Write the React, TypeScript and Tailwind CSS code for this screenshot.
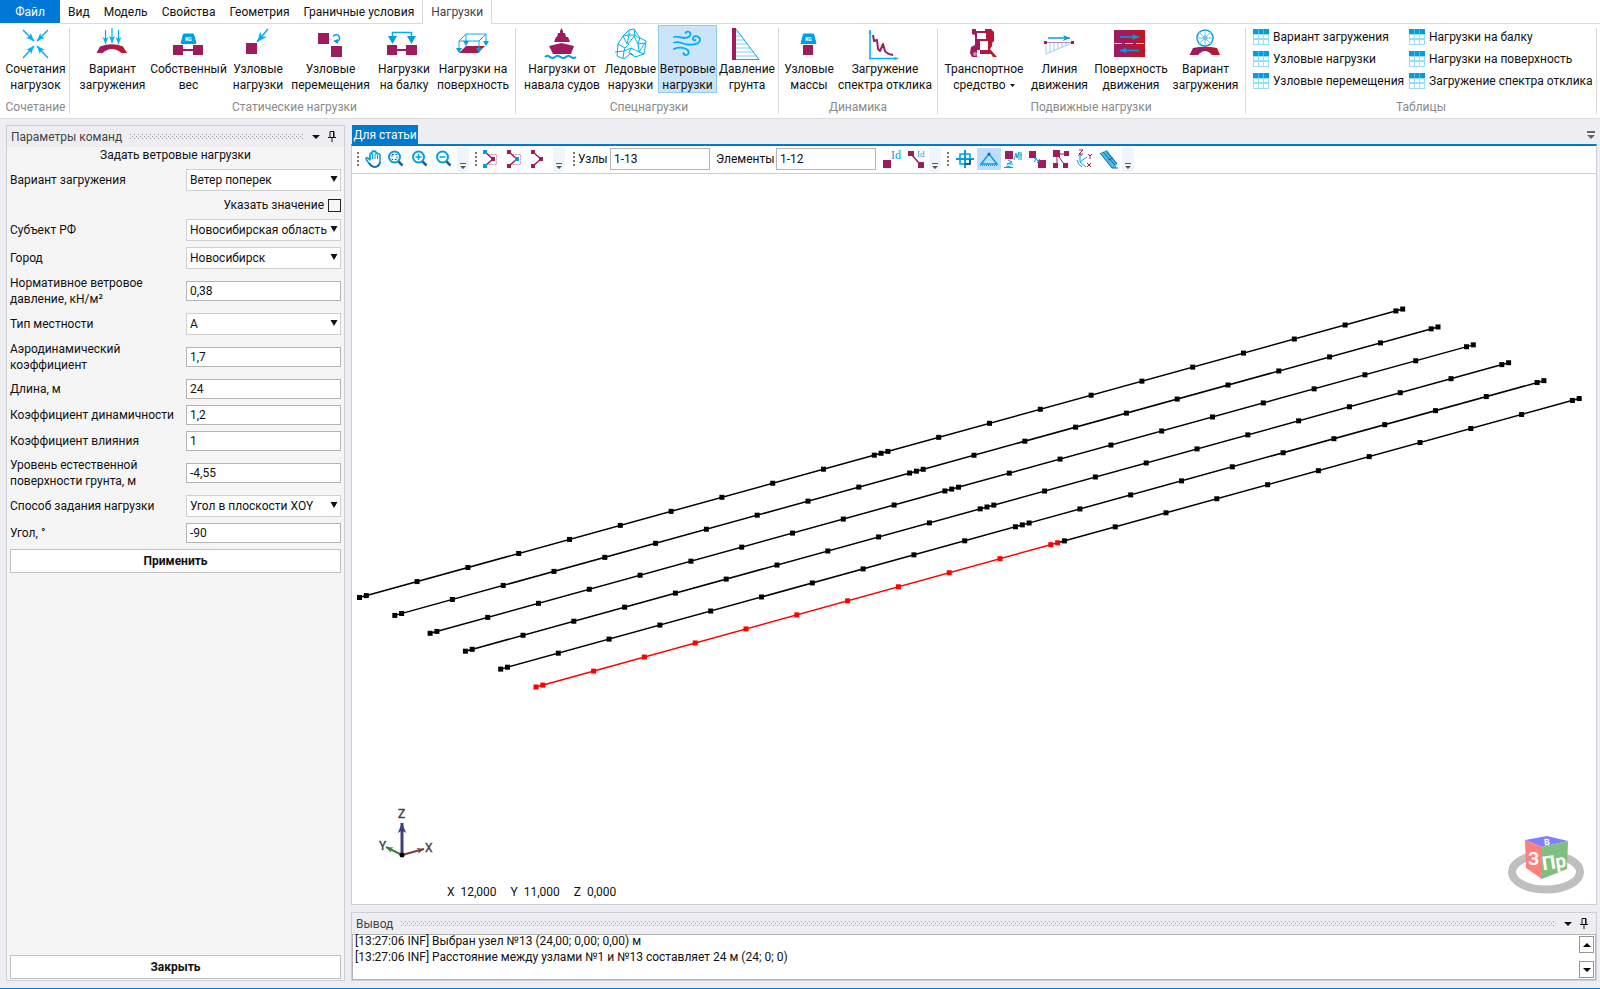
import { useId } from 'react';
import type { ReactNode } from 'react';
import { clsx } from 'clsx';

const BLUE = '#00b0f5';
const CYAN = '#009fe3';
const PLUM = '#9e1b5d';

/* ---------- drawing helpers ---------- */

interface ArrowProps {
  from: [number, number];
  to: [number, number];
  head?: number;
  color?: string;
  width?: number;
}

const Arrow = ({ from, to, head = 7, color = BLUE, width = 1.2 }: ArrowProps) => {
  const angle = Math.atan2(to[1] - from[1], to[0] - from[0]);
  const point = (offset: number, side: number) =>
    [
      to[0] - head * offset * Math.cos(angle) - side * Math.sin(angle),
      to[1] - head * offset * Math.sin(angle) + side * Math.cos(angle),
    ].join(',');
  return (
    <g fill={color} stroke="none">
      <line x1={from[0]} y1={from[1]} x2={to[0]} y2={to[1]} stroke={color} strokeWidth={width} />
      <polygon points={[to.join(','), point(1, head * 0.42), point(0.75, 0), point(1, -head * 0.42)].join(' ')} />
    </g>
  );
};

const BigIcon = ({ children }: { children: ReactNode }) => (
  <svg viewBox="0 0 32 32" className="size-8 shrink-0 overflow-visible" fill="none" aria-hidden="true">
    {children}
  </svg>
);

const RedGradient = ({ id }: { id: string }) => (
  <linearGradient id={id} x1="0" x2="1" y1="0" y2="0">
    <stop offset="0.3" stopColor={PLUM} />
    <stop offset="1" stopColor="#c4161c" />
  </linearGradient>
);

const Weight = () => (
  <>
    <path d="M10.500 6H20.500L23 15.500H8Z" fill={CYAN} stroke={CYAN} strokeLinejoin="round" />
    <text x="15.500" y="13" textAnchor="middle" fontSize="5" fontWeight="800" fill="#fff">KG</text>
  </>
);

/* ---------- ribbon icons ---------- */

const CombinationIcon = () => (
  <BigIcon>
    <Arrow from={[3, 2]} to={[14, 13]} head={8} width={1.5} />
    <Arrow from={[28, 2]} to={[17, 13]} head={8} width={1.5} />
    <Arrow from={[3, 30]} to={[14, 18]} head={8} width={1.5} />
    <Arrow from={[28, 30]} to={[17, 18]} head={8} width={1.5} />
  </BigIcon>
);

const LoadCaseIcon = () => {
  const id = useId();
  return (
    <BigIcon>
      <defs><RedGradient id={id} /></defs>
      <Arrow from={[8.5, 2]} to={[8.5, 16]} />
      <Arrow from={[15, 0]} to={[15, 15]} />
      <Arrow from={[21.5, 2]} to={[21.5, 16]} />
      <path d="M-0.500 25L3 18.500Q15 14 26 18.500L30 25H24.500Q15 17 5.500 25Z" fill={`url(#${id})`} />
    </BigIcon>
  );
};

const SelfWeightIcon = () => (
  <BigIcon>
    <Weight />
    <path d="M0 17h10v10H0zM20 17h10v10H20zM10 21h10v2H10z" fill={PLUM} />
  </BigIcon>
);

const NodeLoadIcon = () => (
  <BigIcon>
    <path d="M4 15h11v11H4z" fill={PLUM} />
    <Arrow from={[26, 1]} to={[15, 14]} head={10} width={1.5} />
  </BigIcon>
);

const NodeShiftIcon = () => (
  <BigIcon>
    <path d="M3 5h11v11H3zM16 18h11v11H16z" fill={PLUM} />
    <path d="M18 8.500a3.500 3.500 0 1 1 4 5" stroke={CYAN} strokeWidth="1.500" />
    <path d="M18 13l5-2v5z" fill={CYAN} />
  </BigIcon>
);

const BeamLoadIcon = () => (
  <BigIcon>
    <path d="M-1 17H9v10H-1zM18 17h11v10H18zM9 21h9v2H9z" fill={PLUM} />
    <path d="M4.500 10V4.500H23.500V10" stroke={BLUE} strokeWidth="1.500" />
    <path d="M0 8h9l-4.500 8zM19 8h9l-4.500 8z" fill={CYAN} />
  </BigIcon>
);

const SurfaceLoadIcon = () => {
  const id = useId();
  return (
    <BigIcon>
      <defs><RedGradient id={id} /></defs>
      <path d="M2 25L9 18H28L21 25Z" fill={`url(#${id})`} />
      <path d="M2 13L9 6H29L22 13ZM2 13v10M9 6v9M22 13v10M29 6v9" stroke={BLUE} />
      <path d="M-1 20h6l-3 5zM6 13h6l-3 5zM19 20h6l-3 5zM26 13h6l-3 5z" fill={CYAN} />
    </BigIcon>
  );
};

const ShipIcon = () => (
  <BigIcon>
    <path d="M14 3l1.500-3L17 3v2h2l1 4h2l2 5H8l2-5h1l1-4h2zM3 18l12.500-3L28 18l-3 8H7z" fill={PLUM} />
    <path d="M-1 29q2.500-2.500 5 0q2.500 2 5 0q2.500-2.500 5.500 0q3 2 5.500 0q2.500-2.500 5 0q2.500 2 5 0" stroke={CYAN} strokeWidth="2" />
  </BigIcon>
);

const IceIcon = () => (
  <BigIcon>
    <path
      d="M14 2l5-1 6 9 6 3-2 13-9 3-4-4-7 6-7-3 1-12 5-8zM8 8l6-1 6 0 5 4M14 2v5l-2 9-4-8M19 1l1 6-7 9M3 16l7 4 4-4M0 24l9-1 1-3M9 23l7-3 8 4 6-9-7 1-4-8M16 20l-2 5 5 3M24 24l5 2M25 10l-2 6 1 8M9 23l-1 7"
      stroke={BLUE}
      strokeLinejoin="round"
    />
  </BigIcon>
);

const WindIcon = () => (
  <BigIcon>
    <g stroke={BLUE} strokeWidth="1.800" strokeLinecap="round">
      <path d="M2 9c4-1.500 6 1 10 1c4 0 7-2 6.500-4.500c-.5-2.500-4.500-2.500-5-.5" />
      <path d="M2 14.500c6-2 9 2 14 2c6 .5 11-.5 12-4c.5-4-5.500-6-7-2.500c-.5 2 1 3 2.500 2" />
      <path d="M2 21c4-2 8-1.500 11-.5c5 1.500 4.500 6.500 1 6.500c-2 0-2.500-1-2.500-2" />
    </g>
  </BigIcon>
);

const SoilIcon = () => (
  <BigIcon>
    <path d="M1 0h4v32H1z" fill={PLUM} />
    <path d="M5 4h3M5 8h6M5 12h9M5 16h12M5 20h15M5 24h18M5 28h21" stroke="#7cd3f7" />
    <path d="M5 1L28 31.500H5" stroke={BLUE} />
  </BigIcon>
);

const NodeMassIcon = () => (
  <BigIcon>
    <Weight />
    <path d="M10 17h10v10H10z" fill={PLUM} />
  </BigIcon>
);

const SpectrumIcon = () => (
  <BigIcon>
    <Arrow from={[1, 31]} to={[1, 2]} head={4} width={1.5} />
    <Arrow from={[0, 30.5]} to={[29, 30.5]} head={4} width={1.5} />
    <path d="M4 7l1 6 3-1 1 9 2 2 3-7 2 7q2 3 8 4" stroke={PLUM} strokeWidth="2" strokeLinejoin="round" />
  </BigIcon>
);

const VehicleIcon = () => {
  const id = useId();
  return (
    <BigIcon>
      <defs><RedGradient id={id} /></defs>
      <path
        fillRule="evenodd"
        fill={`url(#${id})`}
        d="M4 1h4v2h9V1h6l3 3v9l-2 2v3l-2 3 7 8h-4l-2-3H12v-4h8v-9h-8v9h-3v7H4l-2-4 1-6 4-2V7l-3-1zM9 5v6h9V5z"
      />
      <circle cx="7" cy="26" r="2" fill="#fff" fillOpacity=".5" />
    </BigIcon>
  );
};

const LineMoveIcon = () => (
  <BigIcon>
    <path d="M2 14v12L28 15M6 14v10M10 14v8M14 14v7M18 14v5M22 14v3" stroke="#8fd3f3" />
    <path d="M2 14.500H28" stroke={PLUM} strokeOpacity=".5" />
    <path d="M0 13h3v3H0zM27 13h3v3h-3z" fill={PLUM} />
    <Arrow from={[4, 10]} to={[26, 10]} color={CYAN} width={1.5} />
  </BigIcon>
);

const SurfaceMoveIcon = () => {
  const id = useId();
  return (
    <BigIcon>
      <defs><RedGradient id={id} /></defs>
      <path d="M-1 2h31v27H-1z" fill={`url(#${id})`} />
      <path d="M-1 15.500H30" stroke="#fff" strokeDasharray="8 3" strokeOpacity=".8" />
      <Arrow from={[5, 9]} to={[24, 9]} color={CYAN} width={1.5} />
      <Arrow from={[24, 22.5]} to={[5, 22.5]} color={CYAN} width={1.5} />
    </BigIcon>
  );
};

const WheelLoadIcon = () => {
  const id = useId();
  return (
    <BigIcon>
      <defs><RedGradient id={id} /></defs>
      <circle cx="15" cy="10" r="8" stroke={CYAN} strokeWidth="1.500" />
      <circle cx="15" cy="10" r="2" stroke={CYAN} />
      <path d="M15 2v16M7 10h16M9.300 4.300l11.400 11.400M20.700 4.300L9.300 15.700" stroke="#6cc8ee" />
      <path d="M-0.500 27L3 20Q15 17.500 27 20L30 27H22Q15 19 8 27Z" fill={`url(#${id})`} />
    </BigIcon>
  );
};

const TableIcon = () => (
  <svg viewBox="0 0 16 16" className="size-4 shrink-0" aria-hidden="true">
    <path d="M0 0h16v16H0z" fill="#9bdcf7" />
    <path d="M0 0h5v5H0zM5.500 0h5v5h-5zM11 0h5v5h-5z" fill={CYAN} />
    <path d="M1 6h4v3H1zM6 6h4v3H6zM11 6h4v3h-4zM1 11h4v4H1zM6 11h4v4H6zM11 11h4v4h-4z" fill="#fff" />
  </svg>
);

/* ---------- ribbon ---------- */

interface Command {
  lines: [string, string];
  icon: ReactNode;
  width: string;
  active?: boolean;
  menu?: boolean;
}

interface Group {
  title: string;
  className: string;
  commands: Command[];
}

const groups: Group[] = [
  {
    title: 'Сочетание',
    className: 'pl-[3px] pr-px',
    commands: [{ lines: ['Сочетания', 'нагрузок'], icon: <CombinationIcon />, width: 'w-[65px]' }],
  },
  {
    title: 'Статические нагрузки',
    className: 'pl-[7px] pr-[3px]',
    commands: [
      { lines: ['Вариант', 'загружения'], icon: <LoadCaseIcon />, width: 'w-[71px]' },
      { lines: ['Собственный', 'вес'], icon: <SelfWeightIcon />, width: 'w-[81px]' },
      { lines: ['Узловые', 'нагрузки'], icon: <NodeLoadIcon />, width: 'w-[58px]' },
      { lines: ['Узловые', 'перемещения'], icon: <NodeShiftIcon />, width: 'w-[87px]' },
      { lines: ['Нагрузки', 'на балку'], icon: <BeamLoadIcon />, width: 'w-[60px]' },
      { lines: ['Нагрузки на', 'поверхность'], icon: <SurfaceLoadIcon />, width: 'w-[78px]' },
    ],
  },
  {
    title: 'Спецнагрузки',
    className: 'pl-[5px] pr-px',
    commands: [
      { lines: ['Нагрузки от', 'навала судов'], icon: <ShipIcon />, width: 'w-[82px]' },
      { lines: ['Ледовые', 'нарузки'], icon: <IceIcon />, width: 'w-[55px]' },
      { lines: ['Ветровые', 'нагрузки'], icon: <WindIcon />, width: 'w-[59px]', active: true },
      { lines: ['Давление', 'грунта'], icon: <SoilIcon />, width: 'w-[60px]' },
    ],
  },
  {
    title: 'Динамика',
    className: 'pl-[3px] pr-[3px]',
    commands: [
      { lines: ['Узловые', 'массы'], icon: <NodeMassIcon />, width: 'w-[54px]' },
      { lines: ['Загружение', 'спектра отклика'], icon: <SpectrumIcon />, width: 'w-[98px]' },
    ],
  },
  {
    title: 'Подвижные нагрузки',
    className: 'pl-[3px] pr-1',
    commands: [
      { lines: ['Транспортное', 'средство'], icon: <VehicleIcon />, width: 'w-[86px]', menu: true },
      { lines: ['Линия', 'движения'], icon: <LineMoveIcon />, width: 'w-[65px]' },
      { lines: ['Поверхность', 'движения'], icon: <SurfaceMoveIcon />, width: 'w-[78px]' },
      { lines: ['Вариант', 'загружения'], icon: <WheelLoadIcon />, width: 'w-[71px]' },
    ],
  },
];

const tables = [
  ['Вариант загружения', 'Узловые нагрузки', 'Узловые перемещения'],
  ['Нагрузки на балку', 'Нагрузки на поверхность', 'Загружение спектра отклика'],
];

const tabs = ['Вид', 'Модель', 'Свойства', 'Геометрия', 'Граничные условия'];

const RibbonButton = ({ command }: { command: Command }) => (
  <button
    type="button"
    className={clsx(
      'flex h-[68px] flex-col items-center border pt-[2px] whitespace-nowrap',
      command.width,
      command.active ? 'border-[#92c9f2] bg-[#cce4f7]' : 'border-transparent'
    )}
  >
    {command.icon}
    <span className="pt-px leading-4">{command.lines[0]}</span>
    <span className="flex items-center gap-1 leading-4">
      {command.lines[1]}
      {command.menu && (
        <svg viewBox="0 0 5 3" className="h-[3px] w-[5px]" aria-hidden="true">
          <path d="M0 0h5L2.500 3z" fill="#111" />
        </svg>
      )}
    </span>
  </button>
);

const GroupFrame = ({ title, className, children }: { title: string; className?: string; children: ReactNode }) => (
  <section className="flex pt-px pb-[3px]">
    <div className={clsx('flex flex-col items-center justify-between', className)}>
      <div className="flex">{children}</div>
      <h2 className="leading-4 text-[#8a8a8a]">{title}</h2>
    </div>
    <div className="mt-[3px] mb-px w-px bg-[#dadada]" />
  </section>
);

const Ribbon = () => (
  <header className="border-b border-[#dadada] bg-white">
    <nav className="flex h-6 items-stretch">
      <button type="button" className="h-[23px] w-[60px] bg-[#0078d7] text-white">Файл</button>
      <div className="flex flex-1 items-stretch border-b border-[#dadada] pl-2">
        <div className="flex items-center gap-[14px] pr-2">
          {tabs.map((tab) => (
            <button type="button" key={tab}>{tab}</button>
          ))}
        </div>
        <button type="button" className="-mb-px border-x border-[#dadada] bg-white px-2 text-[#444]">Нагрузки</button>
      </div>
    </nav>
    <div className="flex h-[94px] overflow-hidden">
      {groups.map((group) => (
        <GroupFrame key={group.title} title={group.title} className={group.className}>
          {group.commands.map((command, i) => (
            <RibbonButton key={i} command={command} />
          ))}
        </GroupFrame>
      ))}
      <GroupFrame title="Таблицы" className="w-[350px]">
        {tables.map((column, i) => (
          <div key={i} className={clsx('flex shrink-0 flex-col gap-[6px] pt-1', i === 0 ? 'w-[156px]' : 'w-[180px]')}>
            {column.map((name) => (
              <button type="button" key={name} className="flex h-4 items-center gap-1 whitespace-nowrap">
                <TableIcon />
                {name}
              </button>
            ))}
          </div>
        ))}
      </GroupFrame>
    </div>
  </header>
);

/* ---------- dock panel header ---------- */

const DockHeader = ({ title }: { title: string }) => {
  const id = useId();
  return (
    <div className="flex h-[21px] shrink-0 items-center pr-2 pl-1 text-[#444]">
      <h2 className="whitespace-nowrap">{title}</h2>
      <svg className="mr-1 ml-2 h-[5px] min-w-0 flex-1" aria-hidden="true">
        <defs>
          <pattern id={id} width="4" height="4" patternUnits="userSpaceOnUse">
            <path d="M0 0h1v1H0zM2 2h1v1H2z" fill="#999" />
          </pattern>
        </defs>
        <rect width="100%" height="5" fill={`url(#${id})`} />
      </svg>
      <button type="button" aria-label="Меню" className="px-1">
        <svg viewBox="0 0 8 4" className="h-1 w-2"><path d="M0 0h8L4 4z" fill="#111" /></svg>
      </button>
      <button type="button" aria-label="Закрепить" className="pl-1">
        <svg viewBox="0 0 8 11" className="h-[11px] w-2">
          <path d="M2 6.500V.5h4v6M0 6.500h8M4 7v4M5.500 0v6" stroke="#111" fill="none" />
        </svg>
      </button>
    </div>
  );
};

/* ---------- parameters panel ---------- */

interface Field {
  id: string;
  label: ReactNode;
  value: string;
  options?: string[];
}

const firstField: Field = {
  id: 'case',
  label: 'Вариант загружения',
  value: 'Ветер поперек',
  options: ['Ветер поперек', 'Ветер вдоль'],
};

const fields: Field[] = [
  { id: 'region', label: 'Субъект РФ', value: 'Новосибирская область', options: ['Новосибирская область'] },
  { id: 'city', label: 'Город', value: 'Новосибирск', options: ['Новосибирск'] },
  {
    id: 'pressure',
    label: <>Нормативное ветровое<br />давление, кН/м²</>,
    value: '0,38',
  },
  { id: 'terrain', label: 'Тип местности', value: 'A', options: ['A', 'B', 'C'] },
  { id: 'aero', label: <>Аэродинамический<br />коэффициент</>, value: '1,7' },
  { id: 'length', label: 'Длина, м', value: '24' },
  { id: 'dynamic', label: 'Коэффициент динамичности', value: '1,2' },
  { id: 'influence', label: 'Коэффициент влияния', value: '1' },
  { id: 'ground', label: <>Уровень естественной<br />поверхности грунта, м</>, value: '-4,55' },
  { id: 'mode', label: 'Способ задания нагрузки', value: 'Угол в плоскости XOY', options: ['Угол в плоскости XOY'] },
  { id: 'angle', label: 'Угол, °', value: '-90' },
];

const FieldRow = ({ field }: { field: Field }) => (
  <div className="flex items-center">
    <label htmlFor={field.id} className="w-44 shrink-0 leading-4">{field.label}</label>
    {field.options ? (
      <div className="relative min-w-0 flex-1">
        <select
          id={field.id}
          defaultValue={field.value}
          className="block h-[22px] w-full appearance-none border border-[#d0d0d0] bg-white pl-[3px]"
        >
          {field.options.map((option) => <option key={option}>{option}</option>)}
        </select>
        <svg viewBox="0 0 8 6" className="pointer-events-none absolute top-[7px] right-[3px] h-[6px] w-2">
          <path d="M0.500 0h7L4 6z" fill="#111" />
        </svg>
      </div>
    ) : (
      <input
        id={field.id}
        defaultValue={field.value}
        className="h-5 min-w-0 flex-1 border border-[#b4b4b4] bg-white px-[3px]"
      />
    )}
  </div>
);

const ParametersPanel = () => (
  <aside className="flex w-[339px] shrink-0 flex-col border border-[#ccced8]">
    <DockHeader title="Параметры команд" />
    <div className="flex flex-1 flex-col gap-[6px] bg-[#f5f5f5] px-[3px] pb-px">
      <h3 className="text-center leading-4">Задать ветровые нагрузки</h3>
      <FieldRow field={firstField} />
      <label className="flex h-4 items-center justify-end gap-1">
        Указать значение
        <input type="checkbox" className="size-[13px] appearance-none border border-[#222] bg-[#f5f5f5] checked:bg-[#0078d7]" />
      </label>
      {fields.map((field) => <FieldRow key={field.id} field={field} />)}
      <button type="button" className="h-6 border border-[#c0c0c0] bg-white font-bold">Применить</button>
      <button type="button" className="mt-auto h-6 border border-[#c0c0c0] bg-white font-bold">Закрыть</button>
    </div>
  </aside>
);

/* ---------- view toolbar ---------- */

const Tool = ({ label, active, children }: { label: string; active?: boolean; children: ReactNode }) => (
  <button
    type="button"
    aria-label={label}
    className={clsx('flex h-[22px] w-6 shrink-0 items-center justify-center', active && 'bg-[#bfdeff]')}
  >
    <svg viewBox="0 0 18 18" className="size-[18px] overflow-visible" fill="none">{children}</svg>
  </button>
);

const Grip = () => (
  <svg viewBox="0 0 2 14" className="mr-[3px] h-[14px] w-[2px] shrink-0" aria-hidden="true">
    <path d="M0 0h2v2H0zM0 4h2v2H0zM0 8h2v2H0zM0 12h2v2H0z" fill="#777" />
  </svg>
);

const Overflow = () => (
  <button
    type="button"
    aria-label="Ещё"
    className="mr-[6px] ml-px flex h-[25px] w-3 shrink-0 items-end justify-center rounded-r bg-[#eef5fd] pb-[3px]"
  >
    <svg viewBox="0 0 6 6" className="size-[6px]"><path d="M0 0h6v1H0zM0 3h6L3 6z" fill="#555" /></svg>
  </button>
);

const Lens = ({ children }: { children?: ReactNode }) => (
  <>
    <circle cx="7.500" cy="7" r="5.500" stroke={CYAN} strokeWidth="2" />
    <path d="M11.500 11.500l4 4" stroke="#1b62a5" strokeWidth="2.500" />
    {children}
  </>
);

const NodeChain = ({ ends, mid, box }: { ends: string; mid: string; box?: boolean }) => (
  <>
    {box && <path d="M5.500 4.500h8v10h-8" stroke={PLUM} strokeOpacity=".5" strokeDasharray="2 1" />}
    <path d="M3 3l7 6-7 6" stroke={PLUM} strokeWidth="1.500" />
    <path d="M0 0h4v4H0zM0 14h4v4H0z" fill={ends} />
    <path d="M8 7h4v4H8z" fill={mid} />
  </>
);

const Toolbar = () => (
  <div className="flex h-[28px] items-center overflow-hidden border-b border-[#ccced8] bg-white pb-px pl-[5px]">
    <Grip />
    <Tool label="Панорама">
      <path
        d="M3 12L1 9q0-2 2-1l2 2V4q1-2 2 0V2q1-2 2 0v0q1-2 2 0v2q1-2 2 0v0q1-1 2 1v6q0 6-5 6q-4 0-7-5z"
        fill="#fff" stroke={CYAN} strokeWidth="1.500" strokeLinejoin="round"
      />
      <path d="M5 5v5M7.500 4v5M10 4v5M12.500 5v4" stroke={CYAN} />
      <path d="M4 13q3 4 6 4 4-.5 5-5" stroke="#1b62a5" strokeWidth="1.500" />
    </Tool>
    <div className="-ml-[2px] flex">
      <Tool label="Показать всё"><Lens><path d="M5 4.500h5v5H5z" stroke="#1b62a5" strokeDasharray="2 1.500" /></Lens></Tool>
      <Tool label="Увеличить"><Lens><path d="M4.500 7h6M7.500 4v6" stroke={CYAN} strokeWidth="1.500" /></Lens></Tool>
      <Tool label="Уменьшить"><Lens><path d="M4.500 7h6" stroke={CYAN} strokeWidth="1.500" /></Lens></Tool>
    </div>
    <Overflow />
    <Grip />
    <Tool label="Концы"><NodeChain ends={CYAN} mid={PLUM} box /></Tool>
    <Tool label="Середина"><NodeChain ends={PLUM} mid={CYAN} box /></Tool>
    <Tool label="Цепочка"><NodeChain ends={PLUM} mid={PLUM} /></Tool>
    <Overflow />
    <div className="flex items-center pl-[2px]">
      <Grip />
      <label htmlFor="nodes" className="w-8 shrink-0">Узлы</label>
      <input id="nodes" defaultValue="1-13" className="h-[22px] w-[100px] border border-[#b4b4b4] bg-white px-[3px]" />
      <label htmlFor="elements" className="w-[66px] shrink-0 pl-[6px]">Элементы</label>
      <input id="elements" defaultValue="1-12" className="mr-1 h-[22px] w-[100px] border border-[#b4b4b4] bg-white px-[3px]" />
    </div>
    <Tool label="Номера узлов">
      <path d="M0 10h8v8H0z" fill={PLUM} />
      <text x="8" y="9" fontSize="12" fill={CYAN} fontFamily="Liberation Serif, serif">Id</text>
    </Tool>
    <Tool label="Номера элементов">
      <path d="M4 4l8 9" stroke={PLUM} strokeWidth="1.500" />
      <path d="M1 1h6v5H1zM11 12h6v6h-6z" fill={PLUM} />
      <text x="10" y="7" fontSize="9" fill={CYAN} fontFamily="Liberation Serif, serif">Id</text>
    </Tool>
    <Overflow />
    <Grip />
    <div className="flex pl-px">
      <Tool label="Сечения">
        <path d="M9 0v18M0 9h18" stroke={CYAN} strokeWidth="2" />
        <path d="M4 4h10v10H4z" stroke={CYAN} strokeWidth="1.500" />
        <path d="M14 9v5H9" stroke="#1b3f85" strokeWidth="1.500" />
      </Tool>
      <Tool label="Опоры" active>
        <path d="M9 4L1 14H17Z" stroke={CYAN} strokeWidth="1.500" />
        <path d="M0 15.500h18" stroke={CYAN} strokeDasharray="1 1" />
        <circle cx="9" cy="4" r="1.500" fill="#1b62a5" />
      </Tool>
      <Tool label="Нагрузки">
        <path d="M1 1h8v8H1z" fill={PLUM} />
        <path d="M4 10l4 2-5 2h6M0 17.500h9M2 16l5 1M10 10l2-7 1 5 2-6v8M17 2v8M16 5h2" stroke={CYAN} />
      </Tool>
      <Tool label="Шарниры">
        <path d="M1 1h7v7H1zM10 10h8v8h-8z" fill={PLUM} />
        <path d="M6 8l6 4M6 12l3-4M9 13l3-4" stroke={CYAN} />
      </Tool>
      <Tool label="Связи">
        <path d="M5 4v11M5 4h9M5 4l7 10" stroke={PLUM} />
        <path d="M1 0h7v7H1zM12 1h5v5h-5zM1 13h5v5H1zM11 13h5v5h-5z" fill={PLUM} />
      </Tool>
      <Tool label="Оси">
        <path d="M4 4v8l7-5M4 12l6 5M2 6l2-2 2 2M1 10q1 5 5 7" stroke={CYAN} />
        <path d="M3 0h4L3 4h4M12 4l2 2 2-2M14 6v3M11 13l4 4M15 13l-4 4" stroke={PLUM} />
      </Tool>
      <Tool label="Профили">
        <path d="M0 3l7-3 10 13-1 5h-4z" fill="#4bb9e9" />
        <path d="M0 3l12 15M3 2l12 13M6 1l11 13M12 18h6M8 10l5-2" stroke="#14659b" />
      </Tool>
    </div>
    <Overflow />
  </div>
);

/* ---------- 3D view ---------- */

// every beam line carries two spans of 12 elements: short end pieces and ten equal ones
const STEP = 50.8;
const END = 6.8;
const SPAN = END * 2 + STEP * 10;
const SLOPE = -0.2765;
const spanNodes = [0, ...Array.from({ length: 11 }, (_, i) => END + i * STEP), SPAN];
const farNodes = spanNodes.map((x) => x + SPAN);

const Nodes = ({ at, color }: { at: number[]; color: string }) => (
  <g fill={color}>
    {at.map((x) => (
      <rect key={x} x={x - 2.5} y={x * SLOPE - 2.5} width="5" height="5" />
    ))}
  </g>
);

const Model = () => (
  <svg viewBox="0 0 1244 730" className="absolute inset-0 size-full" role="img" aria-label="Схема">
    {Array.from({ length: 6 }).map((_, i) => {
      const selected = i === 5;
      return (
        <g key={i} transform={`translate(${7.5 + i * 35.3} ${423.5 + i * 17.9})`}>
          <line x1={0} y1={0} x2={SPAN} y2={SPAN * SLOPE} stroke={selected ? '#f00' : '#000'} strokeWidth="1.500" />
          <line x1={SPAN} y1={SPAN * SLOPE} x2={SPAN * 2} y2={SPAN * 2 * SLOPE} stroke="#000" strokeWidth="1.500" />
          <Nodes at={farNodes.slice(1)} color="#000" />
          <Nodes at={spanNodes} color={selected ? '#f00' : '#000'} />
        </g>
      );
    })}
  </svg>
);

const Triad = () => (
  <svg viewBox="0 0 60 56" className="absolute bottom-[39px] left-[25px] h-14 w-[60px] overflow-visible" fontSize="12" fill="#444" aria-hidden="true">
    <Arrow from={[25, 46]} to={[47, 40]} head={7} width={2} color="#7f3f3f" />
    <Arrow from={[25, 46]} to={[9, 38]} head={7} width={2} color="#3f7f3f" />
    <Arrow from={[25, 46]} to={[25, 14]} head={10} width={3} color="#3f3f7f" />
    <circle cx="25" cy="46" r="2.500" fill="#000" />
    <g stroke="#444" strokeWidth=".4">
      <text x="21" y="9">Z</text>
      <text x="2" y="41">Y</text>
      <text x="48" y="43">X</text>
    </g>
  </svg>
);

const ViewCube = () => (
  <svg viewBox="0 0 80 60" className="absolute right-[10px] bottom-[9px] h-[60px] w-20" fontWeight="700" fill="#fff" aria-label="Куб вида">
    <ellipse cx="40" cy="37" rx="34" ry="17.500" fill="none" stroke="#bfbfbf" strokeWidth="8" />
    <path d="M19 5L41 1L62 6L36 12Z" fill="#7f7fff" />
    <path d="M19 5L36 12V44L20 33Z" fill="#ff7f7f" />
    <path d="M36 12L62 6L61 34L36 44Z" fill="#7fbf7f" />
    <text x="22" y="30" fontSize="18">З</text>
    <text x="37" y="35" fontSize="19" transform="rotate(-8 38 35)">Пр</text>
    <text x="38" y="10" fontSize="9" transform="rotate(-8 41 7)">В</text>
  </svg>
);

const View = () => (
  <section className="flex min-h-0 flex-1 flex-col">
    <div className="flex h-[19px] items-stretch justify-between pl-px">
      <button type="button" className="w-[66px] bg-[#007acc] pt-px whitespace-nowrap text-white">Для статьи</button>
      <button type="button" aria-label="Список окон" className="px-[2px]">
        <svg viewBox="0 0 8 8" className="size-2"><path d="M0 0h8v2H0zM0 4h8L4 8z" fill="#666" /></svg>
      </button>
    </div>
    <div className="flex min-h-0 flex-1 flex-col border border-t-2 border-[#ccced8] border-t-[#007acc] bg-white">
      <Toolbar />
      <div className="relative min-h-[400px] flex-1">
        <Model />
        <Triad />
        <ViewCube />
        <div className="absolute bottom-1 left-[95px] flex gap-[14px] leading-4">
          <span>X&nbsp; 12,000</span>
          <span>Y&nbsp; 11,000</span>
          <span>Z&nbsp; 0,000</span>
        </div>
      </div>
    </div>
  </section>
);

/* ---------- output ---------- */

const log = [
  '[13:27:06 INF] Выбран узел №13 (24,00; 0,00; 0,00) м',
  '[13:27:06 INF] Расстояние между узлами №1 и №13 составляет 24 м (24; 0; 0)',
];

const ScrollButton = ({ label, path }: { label: string; path: string }) => (
  <button type="button" aria-label={label} className="flex h-[17px] w-[15px] items-center justify-center border border-[#9b968c] bg-white">
    <svg viewBox="0 0 8 4" className="h-1 w-2"><path d={path} fill="#000" /></svg>
  </button>
);

const Output = () => (
  <section className="border border-[#ccced8]">
    <DockHeader title="Вывод" />
    <div className="flex h-[46px] justify-between border border-[#b4b4b4] bg-white">
      <ul className="-mt-[2px] pl-[2px] leading-4">
        {log.map((line) => <li key={line}>{line}</li>)}
      </ul>
      <div className="flex flex-col justify-between p-px">
        <ScrollButton label="Вверх" path="M0 4h8L4 0z" />
        <ScrollButton label="Вниз" path="M0 0h8L4 4z" />
      </div>
    </div>
  </section>
);

export default function App() {
  return (
    <div className="flex h-screen min-h-[700px] flex-col bg-[#eeeef2] font-['Roboto','Open_Sans',sans-serif] text-xs text-[#111]">
      <Ribbon />
      <main className="flex min-h-0 flex-1 gap-[6px] border-b border-[#0078d7] pt-[6px] pr-[3px] pb-[7px] pl-[6px]">
        <ParametersPanel />
        <div className="flex min-w-0 flex-1 flex-col gap-[7px]">
          <View />
          <Output />
        </div>
      </main>
    </div>
  );
}
